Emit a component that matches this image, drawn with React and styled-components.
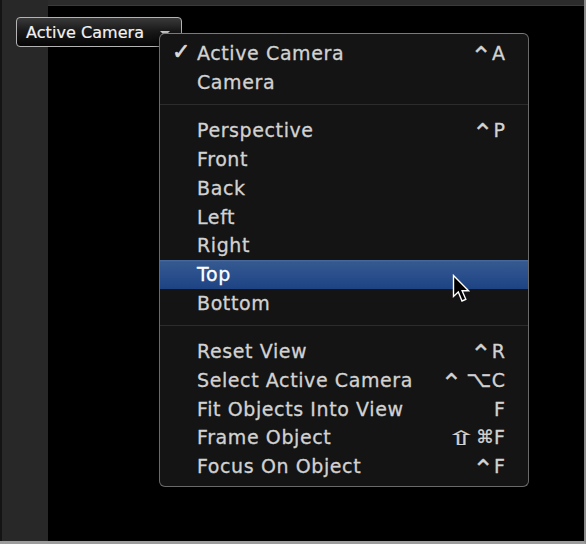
import React from "react";
import styled, { createGlobalStyle } from "styled-components";

const Global = createGlobalStyle`
  html, body {
    margin: 0;
    padding: 0;
    background: #000;
  }
  body {
    font-family: "DejaVu Sans", "Liberation Sans", sans-serif;
    -webkit-font-smoothing: antialiased;
  }
`;

const Frame = styled.div`
  position: relative;
  width: 586px;
  height: 544px;
  box-sizing: border-box;
  display: flex;
  background: #000;
  border-right: 2px solid #8a8a8a;
  border-bottom: 3px solid #9c9c9c;
  overflow: hidden;
`;

const Rail = styled.div`
  width: 46px;
  flex: none;
  background: #282828;
  border-left: 2px solid #141414;
`;

const Viewport = styled.div`
  flex: 1;
  display: flex;
  flex-direction: column;
`;

const TopStrip = styled.div`
  height: 5px;
  background: #2b2b2b;
  border-bottom: 1px solid #3a3a3a;
`;

const Canvas = styled.div`
  flex: 1;
  background: #000;
`;

const ControlAnchor = styled.div`
  position: absolute;
  left: 16px;
  top: 17px;
`;

const PopupButton = styled.div`
  box-sizing: border-box;
  width: 166px;
  height: 30px;
  display: flex;
  align-items: center;
  justify-content: space-between;
  padding: 0 11px 0 9px;
  border: 1.5px solid #b4b4b4;
  border-radius: 4px;
  background: linear-gradient(#3a3a3a 0%, #1a1a1a 45%, #050505 100%);
  color: #f2f2f2;
  font-size: 16px;
  letter-spacing: 0.05px;
  -webkit-text-stroke: 0.2px #f2f2f2;
`;

const Caret = styled.span`
  width: 0;
  height: 0;
  border-left: 5px solid transparent;
  border-right: 5px solid transparent;
  border-top: 5px solid #d0d0d0;
  margin-top: 2px;
`;

const Menu = styled.div`
  position: absolute;
  left: 143px;
  top: 16px;
  width: 370px;
  box-sizing: border-box;
  padding: 5px 0 5px;
  background: #141414;
  border: 1px solid #6a6a6a;
  border-top-color: #7a7a7a;
  border-radius: 6px;
  box-shadow: 0 2px 6px rgba(0, 0, 0, 0.6);
  color: #d2d2d2;
  font-size: 19px;
  letter-spacing: 0.6px;
  -webkit-text-stroke: 0.3px currentColor;
`;

const Row = styled.div`
  position: relative;
  height: 28.8px;
  display: grid;
  grid-template-columns: 25px 1fr auto;
  align-items: center;
  padding: 0 23px 0 12px;
  color: ${(p) => (p.$active ? "#ffffff" : "#d2d2d2")};
  background: ${(p) =>
    p.$active
      ? "linear-gradient(#4b6c9f 0px, #35598f 2px, #2a4f8c 50%, #1e4383 100%)"
      : "transparent"};
`;

const Check = styled.span`
  font-size: 22px;
  line-height: 1;
  color: #dadada;
  -webkit-text-stroke: 0.6px #dadada;
  margin-top: -2px;
`;

const Label = styled.span`
  white-space: nowrap;
`;

const Shortcut = styled.span`
  display: flex;
  align-items: center;
  justify-content: flex-end;
  white-space: nowrap;
  letter-spacing: 0;
`;

const Mod = styled.span`
  display: inline-block;
  font-size: ${(p) => p.$size || 19}px;
  line-height: 1;
  margin: 0 ${(p) => p.$gap || 0}px 0 ${(p) => p.$lead || 0}px;
  transform: translateY(${(p) => p.$shift || 0}px) scale(${(p) => p.$sx || 1}, ${(p) => p.$sy || 1});
`;

const Separator = styled.div`
  height: 19.2px;
  display: flex;
  align-items: center;
  &::after {
    content: "";
    display: block;
    width: 100%;
    height: 1px;
    margin-top: -3px;
    background: #2c2c2c;
  }
`;

const Pointer = styled.svg`
  position: absolute;
  left: 292px;
  top: 14px;
  width: 18px;
  height: 29px;
`;

const CTRL = { g: "⌃", size: 26, shift: 3 };
const OPT = { g: "⌥", size: 22 };
const SHIFT = { g: "⇧", size: 27, sx: 1.4, sy: 0.72, gap: 3, lead: 3, shift: 1 };
const CMD = { g: "⌘", size: 18 };

const groups = [
  [
    { label: "Active Camera", mods: [CTRL], key: "A", checked: true },
    { label: "Camera" },
  ],
  [
    { label: "Perspective", mods: [CTRL], key: "P" },
    { label: "Front" },
    { label: "Back" },
    { label: "Left" },
    { label: "Right" },
    { label: "Top", active: true },
    { label: "Bottom" },
  ],
  [
    { label: "Reset View", mods: [CTRL], key: "R" },
    { label: "Select Active Camera", mods: [{ ...CTRL, gap: 4 }, OPT], key: "C" },
    { label: "Fit Objects Into View", key: "F" },
    { label: "Frame Object", mods: [SHIFT, CMD], key: "F" },
    { label: "Focus On Object", mods: [CTRL], key: "F" },
  ],
];

function MouseArrow() {
  return (
    <Pointer viewBox="0 0 18 29">
      <path
        d="M1.5 1.5 L1.5 22.5 L6.3 18 L10 27 L13.8 25.3 L10.1 16.8 L16.6 16.8 Z"
        fill="#000"
        stroke="#fff"
        strokeWidth="1.4"
        strokeLinejoin="miter"
      />
    </Pointer>
  );
}

export default function App() {
  return (
    <>
      <Global />
      <Frame>
        <Rail />
        <Viewport>
          <TopStrip />
          <Canvas />
        </Viewport>
        <ControlAnchor>
          <PopupButton>
            <span>Active Camera</span>
            <Caret />
          </PopupButton>
          <Menu>
            {groups.map((items, gi) => (
              <React.Fragment key={gi}>
                {gi > 0 && <Separator />}
                {items.map((it) => (
                  <Row key={it.label} $active={it.active}>
                    <Check>{it.checked ? "✓" : ""}</Check>
                    <Label>{it.label}</Label>
                    <Shortcut>
                      {(it.mods || []).map((m, i) => (
                        <Mod
                          key={i}
                          $size={m.size}
                          $shift={m.shift}
                          $gap={m.gap}
                          $lead={m.lead}
                          $sx={m.sx}
                          $sy={m.sy}
                        >
                          {m.g}
                        </Mod>
                      ))}
                      {it.key || ""}
                    </Shortcut>
                    {it.active && <MouseArrow />}
                  </Row>
                ))}
              </React.Fragment>
            ))}
          </Menu>
        </ControlAnchor>
      </Frame>
    </>
  );
}
